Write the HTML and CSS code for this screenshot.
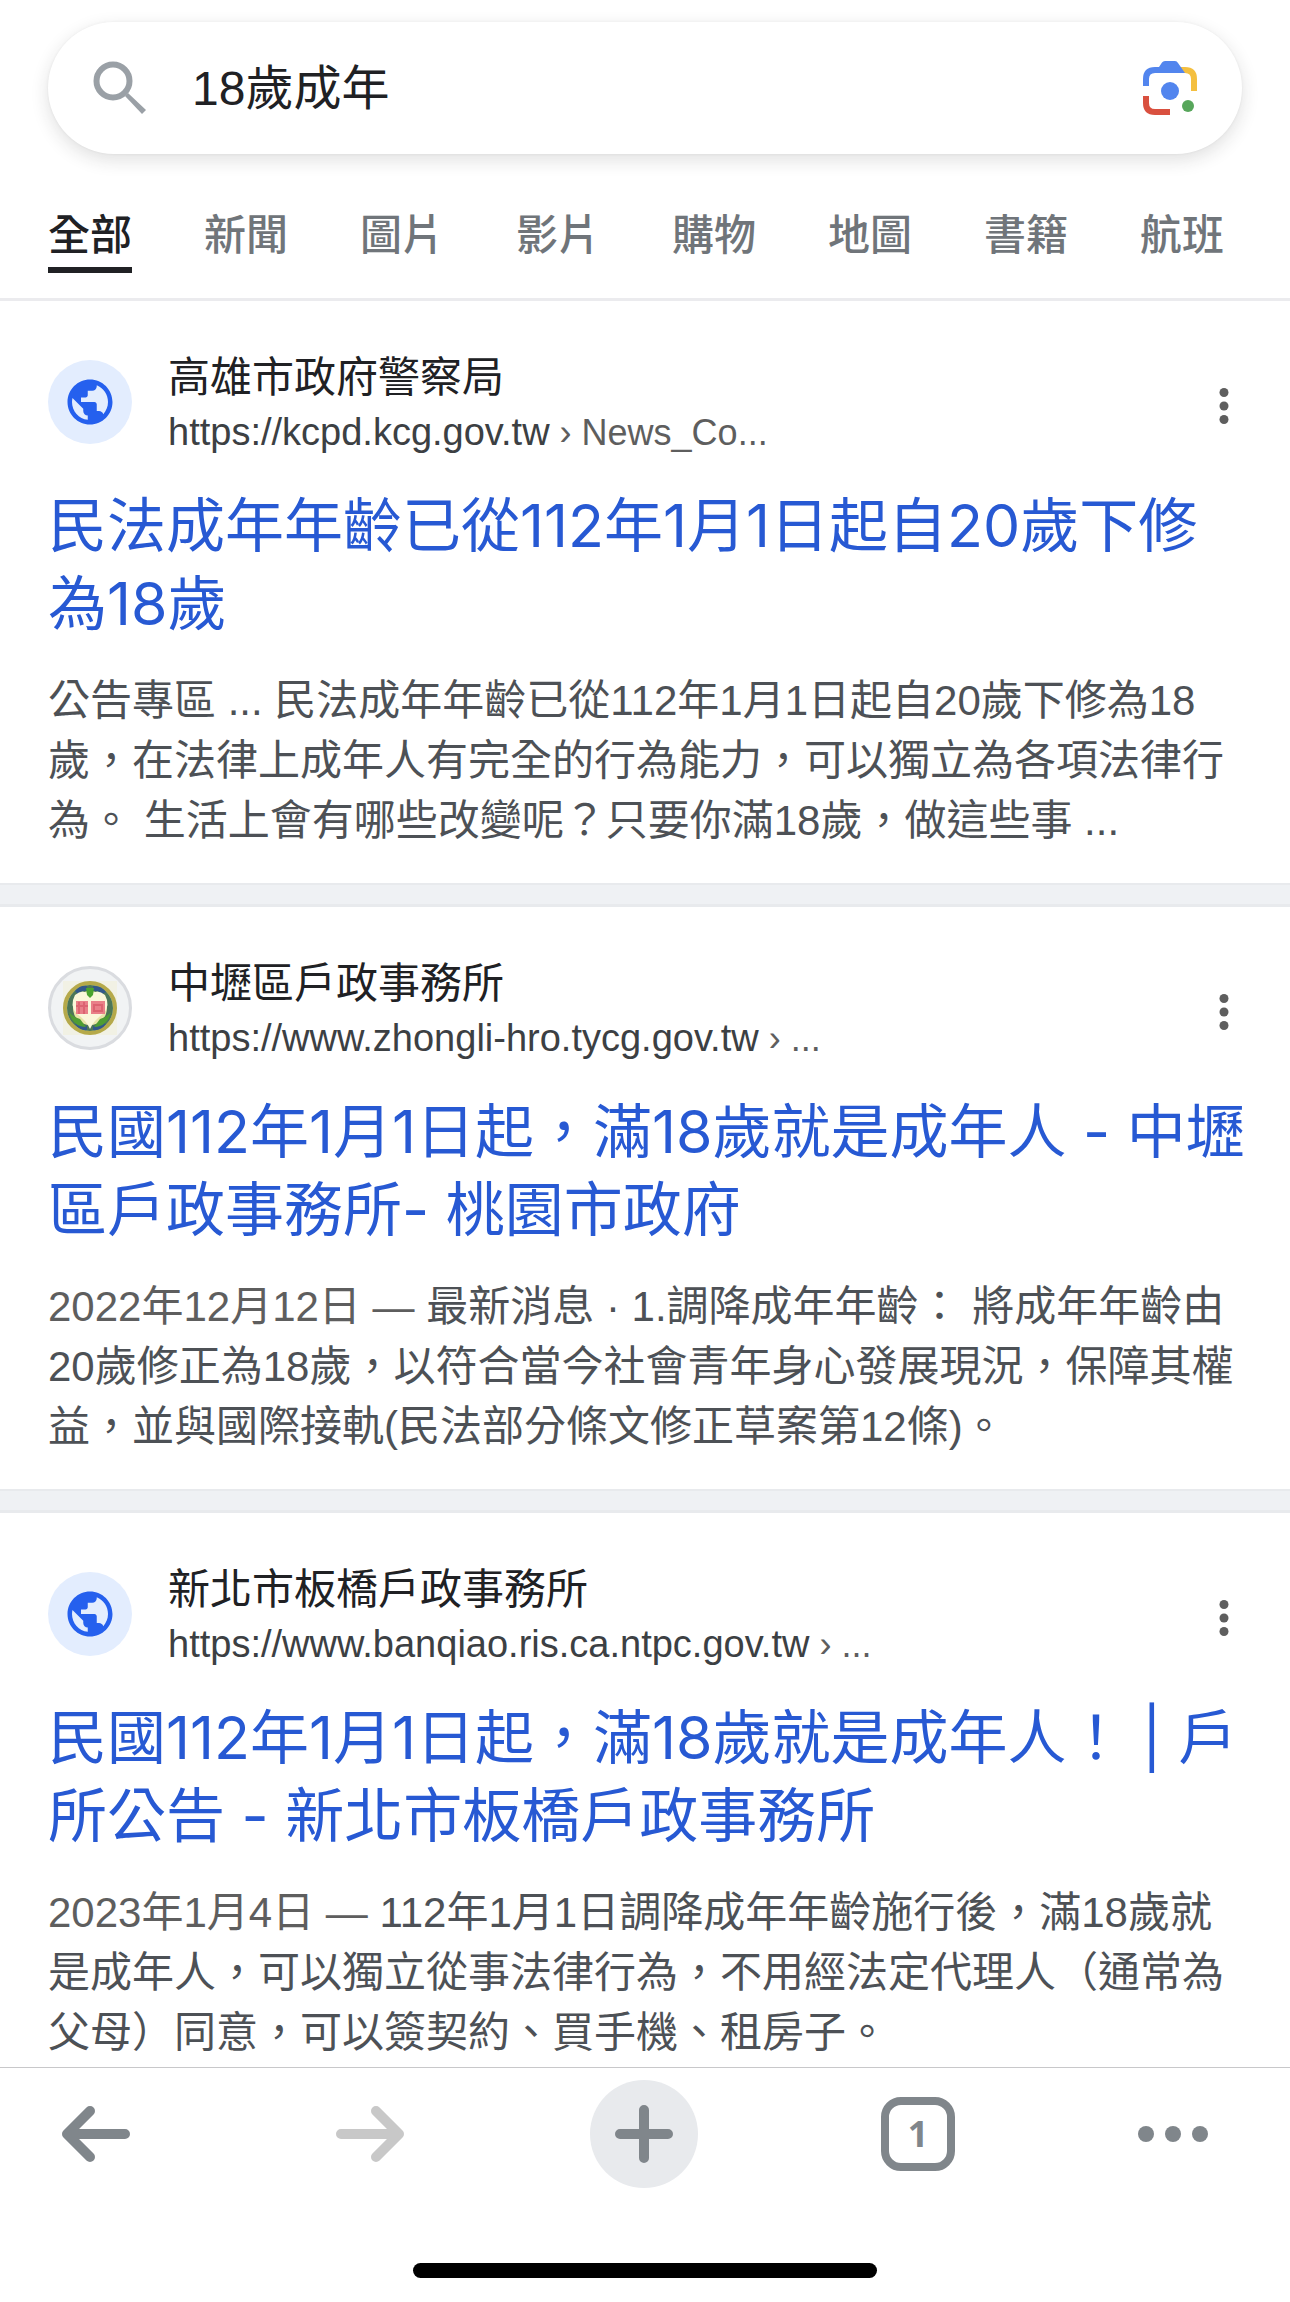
FILE: index.html
```html
<!DOCTYPE html>
<html lang="zh-Hant">
<head>
  <meta charset="UTF-8" />
  <meta name="viewport" content="width=device-width, initial-scale=1.0"/>
  <title>18歲成年 - 搜尋</title>
  <link rel="stylesheet" href="styles.css">
</head>
<body>
  <header class="header">
    <form class="search-bar" role="search">
      <svg class="search-icon" viewBox="0 0 54 54" aria-hidden="true">
        <circle cx="20" cy="20" r="16.5" fill="none" stroke="#9aa0a6" stroke-width="6"/>
        <path d="M32 35L35 32L53 49L49 53Z" fill="#9aa0a6"/>
      </svg>
      <input class="search-input" type="text" name="q" value="18歲成年" aria-label="搜尋" />
      <button class="lens-button" type="button" aria-label="以圖搜尋">
        <svg viewBox="0 0 54 54">
          <path d="M36 6H42Q54 6 54 18V30H48V18Q48 12 42 12H36Z" fill="#f4bf3f"/>
          <path d="M0 25V18Q0 6 12 6H16L19 1.5Q20 0 22 0H32Q34 0 35 2L42 12H12Q6 12 6 18V25Z" fill="#5285ee"/>
          <path d="M0 35V42Q0 54 12 54H27V48H12Q6 48 6 42V35Z" fill="#d9503f"/>
          <circle cx="27" cy="30" r="9" fill="#5285ee"/>
          <circle cx="45" cy="45" r="6" fill="#57a65b"/>
        </svg>
      </button>
    </form>
    <nav class="tabs">
      <a class="tab active" href="#">全部</a>
      <a class="tab" href="#">新聞</a>
      <a class="tab" href="#">圖片</a>
      <a class="tab" href="#">影片</a>
      <a class="tab" href="#">購物</a>
      <a class="tab" href="#">地圖</a>
      <a class="tab" href="#">書籍</a>
      <a class="tab" href="#">航班</a>
    </nav>
  </header>

  <main class="results">
    <article class="result">
      <div class="source">
        <span class="favicon">
          <svg class="globe" viewBox="0 0 24 24"><path d="M12 2C6.48 2 2 6.48 2 12s4.48 10 10 10 10-4.48 10-10S17.52 2 12 2zm-1 17.93c-3.95-.49-7-3.85-7-7.93 0-.62.08-1.21.21-1.79L9 15v1c0 1.1.9 2 2 2v1.93zm6.9-2.54c-.26-.81-1-1.39-1.9-1.39h-1v-3c0-.55-.45-1-1-1H8v-2h2c.55 0 1-.45 1-1V7h2c1.1 0 2-.9 2-2v-.41c2.93 1.19 5 4.06 5 7.41 0 2.08-.8 3.97-2.1 5.39z"/></svg>
        </span>
        <div class="site">
          <div class="site-name">高雄市政府警察局</div>
          <div class="site-url">https://kcpd.kcg.gov.tw<span class="crumb"> › News_Co...</span></div>
        </div>
        <button class="more" type="button" aria-label="更多選項">
          <svg viewBox="0 0 36 36"><circle cx="18" cy="4.5" r="4.5"/><circle cx="18" cy="18" r="4.5"/><circle cx="18" cy="31.5" r="4.5"/></svg>
        </button>
      </div>
      <h3 class="title"><a href="#">民法成年年齡已從112年1月1日起自20歲下修為18歲</a></h3>
      <p class="snippet">公告專區 ... 民法成年年齡已從112年1月1日起自20歲下修為18歲，在法律上成年人有完全的行為能力，可以獨立為各項法律行為。 生活上會有哪些改變呢？只要你滿18歲，做這些事 ...</p>
    </article>

    <article class="result">
      <div class="source">
        <span class="favicon favicon-image">
          <svg class="emblem" viewBox="0 0 54 54">
            <rect width="54" height="54" fill="#f1f1e4"/>
            <circle cx="27" cy="27" r="25" fill="#e9e5a8" stroke="#b5a94a" stroke-width="4"/>
            <circle cx="27" cy="27" r="20" fill="none" stroke="#4c7658" stroke-width="6"/>
            <path d="M12 10Q17 4 24 5V10Q18 9 15 13ZM30 5Q38 4 43 11L39 13Q35 9 30 10ZM12 43Q17 50 24 49V45Q18 45 15 41ZM30 49Q38 50 43 43L39 41Q35 45 30 45Z" fill="#32588a"/>
            <path d="M6 31Q10 36 17 38L23 46Q10 46 6 31ZM48 31Q44 36 37 38L31 46Q44 46 48 31Z" fill="#4f9d32"/>
            <path d="M27 48Q23 39 14 33Q6 25 12 14Q20 7 27 14Q34 7 42 14Q48 25 40 33Q31 39 27 48Z" fill="#fbf7da"/>
            <path d="M23 7H31L30 14L27 17L24 14Z" fill="#4ba32e"/>
            <path d="M13 20H25V33H13ZM28 20H42V33H28Z" fill="#e98088"/>
            <path d="M16 21V33M13 25H25M21 21V33M31 24H39V30H31Z" fill="none" stroke="#dc6470" stroke-width="2"/>
          </svg>
        </span>
        <div class="site">
          <div class="site-name">中壢區戶政事務所</div>
          <div class="site-url">https://www.zhongli-hro.tycg.gov.tw<span class="crumb"> › ...</span></div>
        </div>
        <button class="more" type="button" aria-label="更多選項">
          <svg viewBox="0 0 36 36"><circle cx="18" cy="4.5" r="4.5"/><circle cx="18" cy="18" r="4.5"/><circle cx="18" cy="31.5" r="4.5"/></svg>
        </button>
      </div>
      <h3 class="title"><a href="#">民國112年1月1日起，滿18歲就是成年人 - 中壢區戶政事務所- 桃園市政府</a></h3>
      <p class="snippet"><span class="date">2022年12月12日 — </span>最新消息 · 1.調降成年年齡： 將成年年齡由20歲修正為18歲，以符合當今社會青年身心發展現況，保障其權益，並與國際接軌(民法部分條文修正草案第12條)。</p>
    </article>

    <article class="result">
      <div class="source">
        <span class="favicon">
          <svg class="globe" viewBox="0 0 24 24"><path d="M12 2C6.48 2 2 6.48 2 12s4.48 10 10 10 10-4.48 10-10S17.52 2 12 2zm-1 17.93c-3.95-.49-7-3.85-7-7.93 0-.62.08-1.21.21-1.79L9 15v1c0 1.1.9 2 2 2v1.93zm6.9-2.54c-.26-.81-1-1.39-1.9-1.39h-1v-3c0-.55-.45-1-1-1H8v-2h2c.55 0 1-.45 1-1V7h2c1.1 0 2-.9 2-2v-.41c2.93 1.19 5 4.06 5 7.41 0 2.08-.8 3.97-2.1 5.39z"/></svg>
        </span>
        <div class="site">
          <div class="site-name">新北市板橋戶政事務所</div>
          <div class="site-url">https://www.banqiao.ris.ca.ntpc.gov.tw<span class="crumb"> › ...</span></div>
        </div>
        <button class="more" type="button" aria-label="更多選項">
          <svg viewBox="0 0 36 36"><circle cx="18" cy="4.5" r="4.5"/><circle cx="18" cy="18" r="4.5"/><circle cx="18" cy="31.5" r="4.5"/></svg>
        </button>
      </div>
      <h3 class="title"><a href="#">民國112年1月1日起，滿18歲就是成年人！ | 戶所公告 - 新北市板橋戶政事務所</a></h3>
      <p class="snippet"><span class="date">2023年1月4日 — </span>112年1月1日調降成年年齡施行後，滿18歲就是成年人，可以獨立從事法律行為，不用經法定代理人（通常為父母）同意，可以簽契約、買手機、租房子。</p>
    </article>
  </main>

  <footer class="toolbar">
    <div class="toolbar-buttons">
      <button class="tool" type="button" aria-label="上一頁">
        <svg class="arrow" viewBox="0 0 70 58"><path d="M29 6L6 29L29 52M8 29H64"/></svg>
      </button>
      <button class="tool" type="button" aria-label="下一頁" disabled>
        <svg class="arrow" viewBox="0 0 70 58"><path d="M41 6L64 29L41 52M62 29H6"/></svg>
      </button>
      <button class="tool new-tab" type="button" aria-label="新分頁">
        <svg class="plus" viewBox="0 0 58 58"><path d="M29 5V53M5 29H53"/></svg>
      </button>
      <button class="tool" type="button" aria-label="分頁">
        <span class="tab-count">1</span>
      </button>
      <button class="tool menu" type="button" aria-label="選單">
        <svg class="dots" viewBox="0 0 70 20"><circle cx="8" cy="10" r="8"/><circle cx="35" cy="10" r="8"/><circle cx="62" cy="10" r="8"/></svg>
      </button>
    </div>
    <div class="home-indicator"></div>
  </footer>
</body>
</html>
```
FILE: styles.css
```css
* {
  box-sizing: border-box;
}

body {
  display: flex;
  flex-direction: column;
  height: 100vh;
  margin: 0;
  background: #fff;
  color: #202124;
  font-family: "Liberation Sans", "Noto Sans CJK TC", sans-serif;
  font-size: 42px;
}

button {
  display: flex;
  align-items: center;
  justify-content: center;
  padding: 0;
  border: none;
  background: none;
  cursor: pointer;
}

a {
  color: inherit;
  text-decoration: none;
}

/* header */
.header {
  flex: none;
  padding: 22px 48px 25px;
  border-bottom: 3px solid #ebebee;
}

.search-bar {
  display: flex;
  align-items: center;
  height: 132px;
  padding: 0 45px;
  border-radius: 66px;
  background: #fff;
  box-shadow: 0 6px 18px rgba(32,33,36,0.14), 0 0 3px rgba(32,33,36,0.06);
}

.search-icon {
  flex: none;
  width: 54px;
  height: 54px;
}

.search-input {
  flex: 1;
  min-width: 0;
  margin: 0 45px;
  padding: 2px 0 0;
  border: none;
  outline: none;
  background: none;
  color: #202124;
  font-family: inherit;
  font-size: 48px;
  line-height: 72px;
}

.lens-button,
.lens-button svg {
  width: 54px;
  height: 54px;
}

.tabs {
  display: flex;
  gap: 72px;
  margin-top: 50px;
}

.tab {
  flex: none;
  border-bottom: 6px solid transparent;
  color: #70757a;
  font-weight: 500;
  line-height: 63px;
}

.tab.active {
  border-color: #202124;
  color: #202124;
}

/* results */
.results {
  flex: 1;
  min-height: 0;
  overflow-y: auto;
  background: #eff1f4;
  scrollbar-width: none;
}

.result {
  padding: 47px 48px 32px;
  border-bottom: 2px solid #e8eaed;
  background: #fff;
}

.result + .result {
  margin-top: 19px;
  border-top: 3px solid #e8eaed;
}

.source {
  display: flex;
  align-items: center;
  gap: 36px;
}

.favicon {
  display: flex;
  align-items: center;
  justify-content: center;
  flex: none;
  width: 84px;
  height: 84px;
  border-radius: 50%;
  background: #e3edfe;
}

.favicon-image {
  border: 3px solid #dadce0;
  background: #f1f3f4;
}

.globe {
  width: 54px;
  height: 54px;
  fill: #2560ee;
}

.emblem {
  width: 54px;
  height: 54px;
}

.site {
  flex: 1;
  min-width: 0;
}

.site-name {
  line-height: 60px;
}

.site-url {
  color: #3c4043;
  font-size: 38px;
  line-height: 48px;
}

.crumb {
  color: #5e5e5e;
  font-size: 36px;
  line-height: 1;
}

.more {
  margin-top: 8px;
}

.more,
.more svg {
  width: 36px;
  height: 36px;
  fill: #5e5e5e;
}

/* runs a little past the text column so the last character stays on the line */
.title {
  margin: 31px -12px 28px 0;
  color: #2759d3;
  font-family: Inter, "Noto Sans CJK TC", sans-serif;
  font-size: 59px;
  font-weight: 400;
  line-height: 78px;
}

.snippet {
  margin: 0;
  color: #4d5156;
  line-height: 60px;
}

.date {
  color: #5e5e5e;
}

/* bottom toolbar */
.toolbar {
  flex: none;
  padding: 12px 0 24px;
  border-top: 1px solid #c8c8ca;
  background: #fff;
}

.toolbar-buttons {
  display: flex;
  justify-content: space-between;
  padding: 0 82px 0 42px;
}

.tool {
  width: 108px;
  height: 108px;
  color: #80868b;
}

.tool:disabled {
  color: #c8c8c8;
}

.new-tab {
  border-radius: 50%;
  background: #e8eaed;
}

.menu {
  width: 70px;
}

.arrow,
.plus {
  fill: none;
  stroke: currentColor;
  stroke-width: 10;
  stroke-linecap: round;
  stroke-linejoin: round;
}

.arrow {
  width: 70px;
  height: 58px;
}

.plus {
  width: 58px;
  height: 58px;
}

.tab-count {
  width: 74px;
  height: 74px;
  border: 8px solid currentColor;
  border-radius: 20px;
  font-family: "Noto Sans", sans-serif;
  font-size: 36px;
  font-weight: 700;
  line-height: 58px;
}

.dots {
  width: 70px;
  height: 20px;
  fill: currentColor;
}

.home-indicator {
  width: 36%;
  height: 15px;
  margin: 75px auto 0;
  border-radius: 8px;
  background: #000;
}
```
